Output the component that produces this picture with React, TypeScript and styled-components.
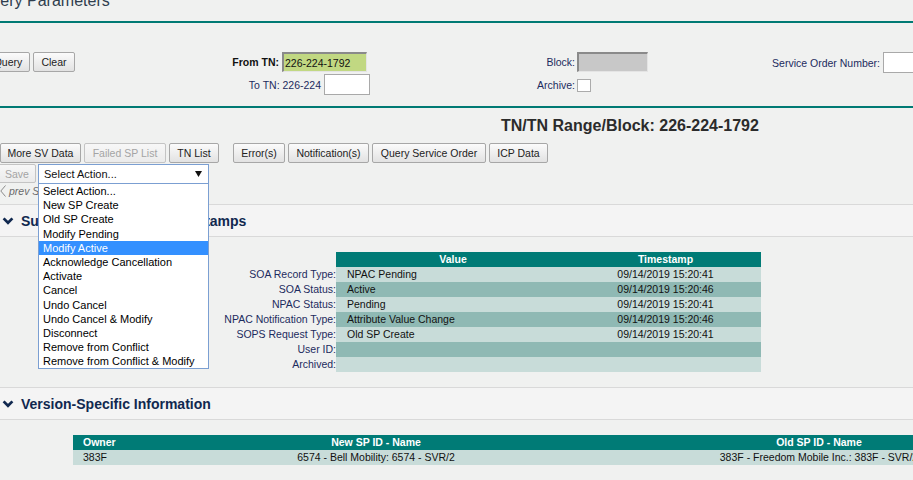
import React from "react";
import styled, { createGlobalStyle } from "styled-components";

const GlobalStyle = createGlobalStyle`
  html, body { margin: 0; padding: 0; background: #f0f1f0; overflow: hidden; }
  body {
    font-family: "Liberation Sans", Arial, sans-serif;
    font-size: 10.5px;
    color: #1c2b5e;
  }
  * { box-sizing: border-box; }
`;

const TEAL = "#007a74";
const NAVY = "#1c2b5e";

const Page = styled.div`
  width: 913px;
  height: 480px;
  overflow: hidden;
  position: relative;
`;

const QueryTitle = styled.div`
  margin: -9px 0 0 -21px;
  height: 32px;
  font-size: 16px;
  line-height: 20px;
  color: #2f3e4e;
  border-bottom: 2px solid ${TEAL};
  white-space: nowrap;
`;

const QueryForm = styled.div`
  height: 85px;
  padding-top: 29px;
  border-bottom: 2px solid ${TEAL};
  display: flex;
  align-items: flex-start;
  margin-left: -14px;
  white-space: nowrap;
  & > * { flex-shrink: 0; }
`;

const Button = styled.button<{ $w: number; $before?: number; $h?: number }>`
  width: ${(p) => p.$w}px;
  height: ${(p) => p.$h ?? 20}px;
  margin: 0 0 0 ${(p) => p.$before ?? 0}px;
  padding: 0;
  flex: 0 0 auto;
  font-family: "Liberation Sans", Arial, sans-serif;
  font-size: 10.5px;
  color: #222;
  background: linear-gradient(#fbfbfb, #e2e2e2);
  border: 1px solid #a7a7a7;
  border-radius: 2px;
  text-align: center;
  white-space: nowrap;
  &:disabled {
    color: #a4a4a4;
    background: linear-gradient(#f7f7f7, #ebebeb);
    border-color: #c4c4c4;
  }
`;

const ButtonPair = styled.div`
  display: flex;
  gap: 3px;
  width: 89px;
`;

const FromGroup = styled.div`
  width: 295px;
  display: flex;
  flex-direction: column;
  align-items: flex-end;
  gap: 2px;
`;

const FieldRow = styled.div<{ $h: number }>`
  height: ${(p) => p.$h}px;
  display: flex;
  align-items: center;
  gap: 3px;
`;

const Label = styled.span<{ $bold?: boolean }>`
  color: ${(p) => (p.$bold ? "#111" : NAVY)};
  font-weight: ${(p) => (p.$bold ? 700 : 400)};
`;

const InsetInput = styled.input<{ $w: number; $bg: string; $right?: number }>`
  width: ${(p) => p.$w}px;
  height: 20px;
  margin: 0 ${(p) => p.$right ?? 0}px 0 0;
  padding: 0 0 0 1px;
  font: 10.5px "Liberation Sans", Arial, sans-serif;
  color: #111;
  background: ${(p) => p.$bg};
  border-style: solid;
  border-width: 2px 1px 1px 2px;
  border-color: #8a8a8a #e4e4e4 #e4e4e4 #8a8a8a;
  outline: none;
`;

const PlainInput = styled.input<{ $w: number }>`
  width: ${(p) => p.$w}px;
  height: 21px;
  margin: 0;
  padding: 0 2px;
  font: 10.5px "Liberation Sans", Arial, sans-serif;
  background: #fff;
  border: 1px solid #a9a9a9;
  outline: none;
  flex: 0 0 auto;
`;

const CheckBox = styled.span`
  display: inline-block;
  width: 14px;
  height: 13px;
  background: #fff;
  border: 1px solid #ababab;
  margin-top: 2px;
`;

const BlockGroup = styled.div`
  display: grid;
  grid-template-columns: 205px 71px;
  grid-template-rows: 20px 21px;
  column-gap: 2px;
  row-gap: 2px;
  align-items: center;
`;

const GridLabel = styled.span`
  justify-self: end;
  color: ${NAVY};
`;

const ServiceGroup = styled.div`
  display: flex;
  align-items: center;
  gap: 3px;
  height: 21px;
`;

const ServiceLabel = styled.span`
  width: 232px;
  text-align: right;
  color: ${NAVY};
`;

const ResultTitle = styled.div`
  margin: 8px 0 0 501px;
  height: 19px;
  font-size: 16px;
  line-height: 19px;
  font-weight: 700;
  color: #2b2b2b;
  white-space: nowrap;
`;

const ButtonRow = styled.div`
  margin-top: 8px;
  display: flex;
  gap: 3px;
  height: 20px;
`;

const ActionRow = styled.div`
  margin: 1px 0 0 -2px;
  display: flex;
  gap: 2px;
  height: 20px;
  position: relative;
  z-index: 5;
`;

const SelectWrap = styled.div`
  position: relative;
  width: 171px;
  height: 20px;
`;

const SelectBox = styled.div`
  width: 100%;
  height: 100%;
  background: #fff;
  border: 1px solid #7b9fd2;
  display: flex;
  align-items: center;
  justify-content: space-between;
  padding: 0 6px 0 5px;
  font-size: 11px;
  color: #111;
`;

const DropList = styled.ul`
  position: absolute;
  left: 0;
  top: 19px;
  width: 171px;
  margin: 0;
  padding: 0;
  list-style: none;
  background: #fff;
  border: 1px solid #7b9fd2;
`;

const Option = styled.li<{ $active?: boolean }>`
  height: 14.2px;
  line-height: 14.2px;
  padding-left: 4px;
  font-size: 11px;
  white-space: nowrap;
  color: ${(p) => (p.$active ? "#fff" : "#000")};
  background: ${(p) => (p.$active ? "#3390ff" : "transparent")};
`;

const PrevLink = styled.div`
  height: 14px;
  display: flex;
  align-items: center;
  gap: 3px;
  font-style: italic;
  color: #6a6a6a;
  font-size: 10.5px;
`;

const SectionHeader = styled.div<{ $top: number }>`
  margin-top: ${(p) => p.$top}px;
  height: 33px;
  background: #f4f4f4;
  border-top: 1px solid #d9d9d9;
  border-bottom: 1px solid #d9d9d9;
  display: flex;
  align-items: center;
  gap: 7px;
  padding-left: 2px;
  font-size: 14px;
  font-weight: 700;
  color: #10284f;
  white-space: nowrap;
`;

const DataGrid = styled.div<{ $cols: string; $left: number }>`
  margin: 15px 0 0 ${(p) => p.$left}px;
  display: grid;
  grid-template-columns: ${(p) => p.$cols};
  grid-auto-rows: 15px;
  white-space: nowrap;
`;

type CellProps = {
  $tone?: "head" | "light" | "dark" | "none";
  $align?: "left" | "center" | "right";
  $pad?: number;
};

const toneBg = (t?: string) =>
  t === "head" ? "#007b76" : t === "light" ? "#c8dcd9" : t === "dark" ? "#8fb9b4" : "transparent";

const Cell = styled.div<CellProps>`
  height: 15px;
  line-height: 15px;
  overflow: hidden;
  background: ${(p) => toneBg(p.$tone)};
  text-align: ${(p) => p.$align ?? "left"};
  padding-left: ${(p) => p.$pad ?? 0}px;
  color: ${(p) => (p.$tone === "head" ? "#fff" : p.$tone === "none" ? NAVY : "#111")};
  font-weight: ${(p) => (p.$tone === "head" ? 700 : 400)};
`;

const Chevron = () => (
  <svg width="12" height="8" viewBox="0 0 12 8">
    <polyline points="1.6,1.4 6,5.8 10.4,1.4" fill="none" stroke="#10284f" strokeWidth="2.7" />
  </svg>
);

const Arrow = () => (
  <svg width="7" height="6" viewBox="0 0 7 6">
    <polygon points="0,0 7,0 3.5,6" fill="#111" />
  </svg>
);

const PrevArrow = () => (
  <svg width="6" height="12" viewBox="0 0 6 12">
    <polyline points="5.5,0.5 0.8,6 5.5,11.5" fill="none" stroke="#8a8a8a" strokeWidth="1" />
  </svg>
);

const actions = [
  "Select Action...",
  "New SP Create",
  "Old SP Create",
  "Modify Pending",
  "Modify Active",
  "Acknowledge Cancellation",
  "Activate",
  "Cancel",
  "Undo Cancel",
  "Undo Cancel & Modify",
  "Disconnect",
  "Remove from Conflict",
  "Remove from Conflict & Modify",
];

const statusRows: [string, string, string][] = [
  ["SOA Record Type:", "NPAC Pending", "09/14/2019 15:20:41"],
  ["SOA Status:", "Active", "09/14/2019 15:20:46"],
  ["NPAC Status:", "Pending", "09/14/2019 15:20:41"],
  ["NPAC Notification Type:", "Attribute Value Change", "09/14/2019 15:20:46"],
  ["SOPS Request Type:", "Old SP Create", "09/14/2019 15:20:41"],
  ["User ID:", "", ""],
  ["Archived:", "", ""],
];

export default function App() {
  return (
    <>
      <GlobalStyle />
      <Page>
        <QueryTitle>Query Parameters</QueryTitle>
        <QueryForm>
          <ButtonPair>
            <Button $w={44}>Query</Button>
            <Button $w={42}>Clear</Button>
          </ButtonPair>
          <FromGroup>
            <FieldRow $h={20}>
              <Label $bold>From TN:</Label>
              <InsetInput $w={85} $bg="#c1d882" $right={3} readOnly value="226-224-1792" />
            </FieldRow>
            <FieldRow $h={21}>
              <Label>To TN: 226-224</Label>
              <PlainInput $w={46} readOnly value="" />
            </FieldRow>
          </FromGroup>
          <BlockGroup>
            <GridLabel>Block:</GridLabel>
            <InsetInput $w={71} $bg="#c8c8c8" readOnly value="" />
            <GridLabel>Archive:</GridLabel>
            <CheckBox />
          </BlockGroup>
          <ServiceGroup>
            <ServiceLabel>Service Order Number:</ServiceLabel>
            <PlainInput $w={120} readOnly value="" />
          </ServiceGroup>
        </QueryForm>

        <ResultTitle>TN/TN Range/Block: 226-224-1792</ResultTitle>

        <ButtonRow>
          <Button $w={81}>More SV Data</Button>
          <Button $w={82} disabled>Failed SP List</Button>
          <Button $w={50}>TN List</Button>
          <Button $w={52} $before={11}>Error(s)</Button>
          <Button $w={81}>Notification(s)</Button>
          <Button $w={114}>Query Service Order</Button>
          <Button $w={59}>ICP Data</Button>
        </ButtonRow>

        <ActionRow>
          <Button $w={38} $h={19} disabled>Save</Button>
          <SelectWrap>
            <SelectBox>
              <span>Select Action...</span>
              <Arrow />
            </SelectBox>
            <DropList>
              {actions.map((a) => (
                <Option key={a} $active={a === "Modify Active"}>{a}</Option>
              ))}
            </DropList>
          </SelectWrap>
        </ActionRow>

        <PrevLink>
          <PrevArrow />
          <span>prev SV</span>
        </PrevLink>

        <SectionHeader $top={6}>
          <Chevron />
          <span>Subscription Version Timestamps</span>
        </SectionHeader>

        <DataGrid $cols="336px 234px 191px" $left={0}>
          <Cell $tone="none" />
          <Cell $tone="head" $align="center">Value</Cell>
          <Cell $tone="head" $align="center">Timestamp</Cell>
          {statusRows.map(([l, v, t], i) => {
            const tone = i % 2 === 0 ? "light" : "dark";
            return (
              <React.Fragment key={l}>
                <Cell $tone="none" $align="right">{l}</Cell>
                <Cell $tone={tone} $pad={11}>{v}</Cell>
                <Cell $tone={tone} $align="center">{t}</Cell>
              </React.Fragment>
            );
          })}
        </DataGrid>

        <SectionHeader $top={15}>
          <Chevron />
          <span>Version-Specific Information</span>
        </SectionHeader>

        <DataGrid $cols="150px 306px 580px" $left={73}>
          <Cell $tone="head" $pad={10}>Owner</Cell>
          <Cell $tone="head" $align="center">New SP ID - Name</Cell>
          <Cell $tone="head" $align="center">Old SP ID - Name</Cell>
          <Cell $tone="light" $pad={10}>383F</Cell>
          <Cell $tone="light" $align="center">6574 - Bell Mobility: 6574 - SVR/2</Cell>
          <Cell $tone="light" $align="center">383F - Freedom Mobile Inc.: 383F - SVR/2</Cell>
        </DataGrid>
      </Page>
    </>
  );
}
